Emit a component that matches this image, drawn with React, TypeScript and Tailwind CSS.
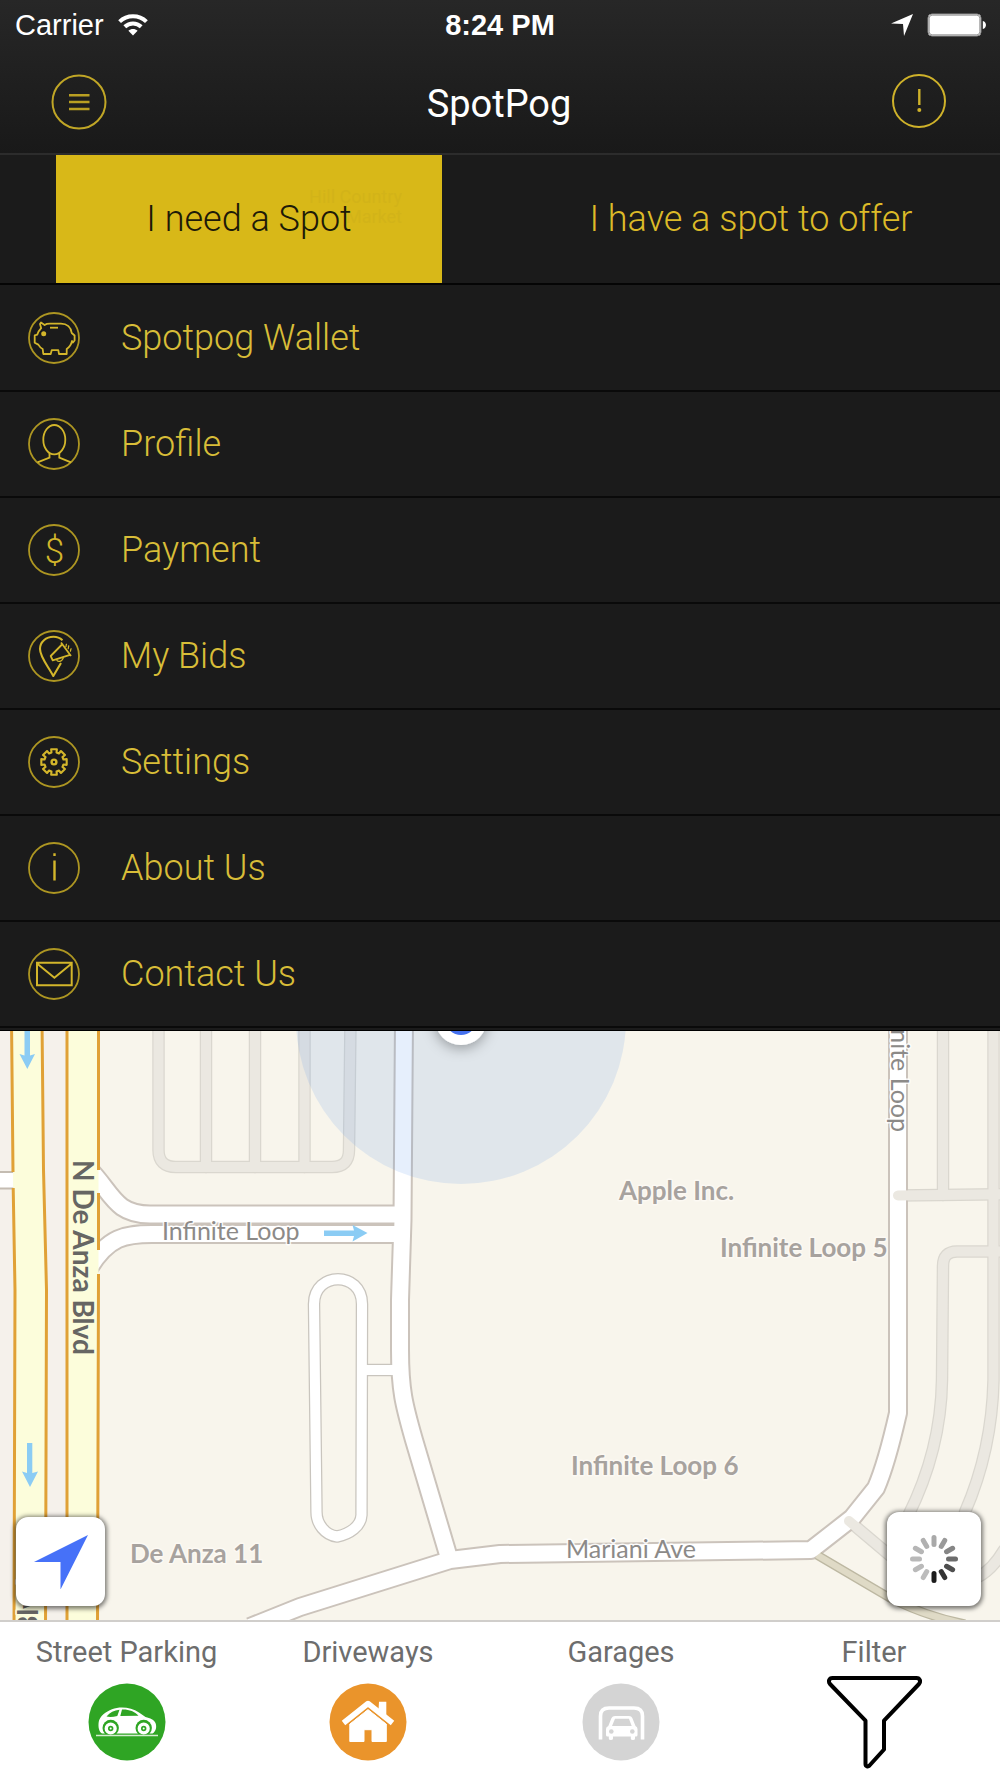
import React from "react";

const GOLD = "#d3b62b";

function Ring({ children }: { children?: React.ReactNode }) {
  return (
    <svg viewBox="0 0 52 52" className="size-[52px] shrink-0" fill="none" stroke={GOLD} strokeWidth="1.8" aria-hidden="true">
      <circle cx="26" cy="26" r="25" stroke="#ad9622" strokeWidth="1.8" />
      {children}
    </svg>
  );
}

function gearPath(cx: number, cy: number, outer: number, inner: number, teeth: number) {
  const step = (Math.PI * 2) / teeth;
  const pts: string[] = [];
  for (let i = 0; i < teeth; i++) {
    const a = i * step - Math.PI / 2;
    const spots: [number, number][] = [
      [inner, -0.26],
      [outer, -0.22],
      [outer, 0.22],
      [inner, 0.26],
    ];
    for (const [r, o] of spots) {
      pts.push(`${(cx + r * Math.cos(a + o)).toFixed(2)} ${(cy + r * Math.sin(a + o)).toFixed(2)}`);
    }
  }
  return `M${pts.join("L")}Z`;
}

const menu: { label: string; icon: React.ReactNode }[] = [
  {
    label: "Spotpog Wallet",
    icon: (
      <Ring>
        <path strokeLinejoin="round" d="M13 10.5L16.6 13C18 12 20 11.7 22 11.7H33C39 11.7 43 15.5 43.7 21L46.6 23.5V28.5L45 30.5L44 29C43.3 32.5 41.5 35 38.7 37V42H31L30.3 38.2H23.7L22.7 42H15.3L14.7 37C12.6 36 11.5 34.6 10.3 32.6L6.7 30.8V23.3L9.3 22.6C10 20 11.5 18 13.2 16.2L12 12Z" />
        <circle cx="15.7" cy="21.7" r="1.6" fill={GOLD} />
        <path d="M22 15.7H30" />
      </Ring>
    ),
  },
  {
    label: "Profile",
    icon: (
      <Ring>
        <ellipse cx="26.3" cy="21.7" rx="11" ry="14.7" />
        <path d="M21.5 35V39.6L9.5 44.4M31.3 35V39.6L43 44.4" />
      </Ring>
    ),
  },
  {
    label: "Payment",
    icon: (
      <Ring>
        <text x="26.5" y="39" textAnchor="middle" fill={GOLD} stroke="none" fontSize="35" fontFamily="Roboto, sans-serif" fontWeight="300">$</text>
      </Ring>
    ),
  },
  {
    label: "My Bids",
    icon: (
      <Ring>
        <path strokeWidth="2.1" strokeLinejoin="round" d="M34.5 10.3C32 8 29 6.8 25.5 6.8C18 6.8 12 12 12 19C12 27 20 36 25.3 46L33 33" />
        <path strokeLinejoin="round" d="M33 12.5L43 26M34 14.5L22.7 26L24.7 30.3L42 24.8" />
        <path strokeWidth="1.2" d="M28.5 29.5C29.5 32.5 34 32 35.5 27.5M37.5 17C39 16 37.3 15 38.8 14M39.8 19C41.3 18 39.6 17 41.1 15.5M42 21.5C43.5 20.5 41.8 19.5 43.5 18.5" />
      </Ring>
    ),
  },
  {
    label: "Settings",
    icon: (
      <Ring>
        <path strokeWidth="2.1" strokeLinejoin="round" d={gearPath(26, 26, 13, 9.8, 8)} />
        <circle cx="26" cy="26" r="2.4" strokeWidth="2.4" />
      </Ring>
    ),
  },
  {
    label: "About Us",
    icon: (
      <Ring>
        <path strokeWidth="2.4" d="M26.5 18.5V38.5M26.5 11.2V14" />
      </Ring>
    ),
  },
  {
    label: "Contact Us",
    icon: (
      <Ring>
        <path strokeWidth="2" d="M9 14.7H43.7V37.3H9ZM9 15.5L26.4 29.7L43.7 15.5" />
      </Ring>
    ),
  },
];

function StatusBar() {
  return (
    <div className="relative flex h-[50px] items-center justify-between pr-[13px] pl-[15px] font-['Liberation_Sans',sans-serif] text-[29px] leading-8 text-white">
      <div className="flex items-center gap-3.5">
        <span>Carrier</span>
        <svg viewBox="0 0 30 22" className="h-[22px] w-[30px]" fill="none" stroke="#fff" strokeWidth="4" aria-hidden="true">
          <path d="M1.6 7.6C9 .4 21 .4 28.4 7.6" />
          <path d="M6.8 12.8C11.5 8.3 18.5 8.3 23.2 12.8" />
          <path d="M15 21.6L10.4 16.8C13 14.4 17 14.4 19.6 16.8Z" fill="#fff" stroke="none" />
        </svg>
      </div>
      <span className="absolute left-1/2 -translate-x-1/2 font-bold">8:24 PM</span>
      <div className="flex items-center gap-3.5">
        <svg viewBox="0 0 22 22" className="size-[22px]" fill="#fff" aria-hidden="true">
          <path d="M22 0L13 22L12 10L0 9.5Z" />
        </svg>
        <svg viewBox="0 0 60 24" className="h-6 w-[60px]" aria-hidden="true">
          <rect x="1" y="1" width="53" height="22" rx="4" fill="#fff" stroke="#8a8a8a" strokeWidth="1" />
          <rect x="2.2" y="2.2" width="50.6" height="19.6" rx="3" fill="none" stroke="#555" strokeWidth=".6" />
          <path d="M55.8 8C60 9 60 15 55.8 16Z" fill="#fff" />
        </svg>
      </div>
    </div>
  );
}

function Roads() {
  const parking = [
    "M158.5 1020V1150Q158.5 1167 176 1167H332Q349 1167 349 1150L350.5 1020",
    "M206 1020V1167",
    "M255 1020V1167",
    "M304.5 1020V1167",
    "M943 1020V1195",
    "M898 1195.500L1010 1194",
    "M993.500 1020V1380Q992 1450 965 1512",
    "M1010 1251.500H957Q943 1251.500 943 1266L942 1380Q941 1450 908 1516",
    "M849 1521L900 1564",
    "M978 1577Q992 1570 1004 1550",
  ];
  const streets = [
    "M88 1168C112 1192 114 1214.500 150 1214.500H400",
    "M88 1270C108 1236 126 1234 152 1234H400",
    "M404 1020L402.500 1220L400 1300V1350C400 1390 404 1405 414 1440L449 1558",
    "M250 1627L300 1607L450 1560L500 1554L811 1550L852 1518L876 1488C886 1465 893 1435 898 1413V1020",
  ];
  const loop = [
    "M314 1304C314 1271 362 1271 362 1304L361.500 1515C361 1526 350 1534 337 1536.500C325 1535 316.500 1524 316.500 1512Z",
    "M362 1370H396",
  ];
  return (
    <>
      <rect y="1020" width="14" height="610" fill="#f5f1eb" />
      <rect x="44" y="1020" width="24" height="610" fill="#f5f1eb" />
      <g fill="none" stroke="#dad7cf" strokeWidth="12.500" strokeLinecap="round">{parking.map((d) => <path key={d} d={d} />)}</g>
      <g fill="none" stroke="#cbc3bb" strokeWidth="20" strokeLinejoin="round">{streets.map((d) => <path key={d} d={d} />)}</g>
      <path d="M817 1555L890 1598Q925 1616 965 1624" fill="none" stroke="#bdb8a2" strokeWidth="9" />
      <path d="M817 1555L890 1598Q925 1616 965 1624" fill="none" stroke="#dfdac6" strokeWidth="6.500" />
      <g fill="none" stroke="#c9c5be" strokeWidth="12.500">{loop.map((d) => <path key={d} d={d} />)}</g>
      <g fill="none" stroke="#fff" strokeWidth="16" strokeLinejoin="round">{streets.map((d) => <path key={d} d={d} />)}</g>
      <g fill="none" stroke="#fff" strokeWidth="10">{loop.map((d) => <path key={d} d={d} />)}</g>
      <g fill="none" stroke="#ebe8e1" strokeWidth="10" strokeLinecap="round">{parking.map((d) => <path key={d} d={d} />)}</g>
      <path d="M0 1172H16V1188H0Z" fill="#fff" />
      <path d="M0 1172H14M0 1188.500H14" stroke="#c4bcb2" strokeWidth="2" />
      <path d="M11.500 1020L13 1170L15 1290L14 1630H45.500L46.500 1290L43.500 1170L42 1020Z" fill="#fcfddb" />
      <path d="M67 1020H98.500V1630H67Z" fill="#fcfddb" />
      <path d="M11.500 1020L13 1172M13.200 1188L15 1290L14 1630M45.500 1630L46.500 1290L43.500 1170L42 1020M67 1020V1630M98.500 1020V1170M98.500 1193V1250M98.500 1274L97.500 1630" fill="none" stroke="#e0a136" strokeWidth="3" />
      <path d="M13.200 1174H18V1187H13.200Z" fill="#fcfddb" />
    </>
  );
}

function StreetMap() {
  return (
    <svg viewBox="0 1031 1000 589" preserveAspectRatio="xMidYMid slice" className="absolute inset-0 size-full" role="img" aria-label="Map of Infinite Loop">
      <defs>
        <filter id="dotShadow" x="-50%" y="-50%" width="200%" height="200%">
          <feDropShadow dx="0" dy="3" stdDeviation="7" floodColor="#000" floodOpacity=".35" />
        </filter>
      </defs>
      <rect y="1020" width="1000" height="610" fill="#f8f5ec" />
      <Roads />
      <circle cx="461" cy="1019" r="165" fill="rgb(88,148,235)" fillOpacity=".15" />
      <circle cx="461" cy="1019" r="26" fill="#fff" filter="url(#dotShadow)" />
      <circle cx="461" cy="1019" r="16" fill="#4470ee" />
      <g fill="#8bccf4">
        <path d="M24.500 1020H30V1055.500L35 1054L27.300 1069L19.500 1054L24.500 1055.500Z" />
        <path d="M27 1443H32.300V1473L38 1471.500L30 1487L22 1471.500L27 1473Z" />
        <path d="M324 1230.500V1236H354L352.500 1241.500L367.500 1233L352.500 1225L354 1230.500Z" />
      </g>
      <g fontFamily="Lato, sans-serif" fontSize="26" paintOrder="stroke" strokeLinejoin="round">
        <g fontSize="25" fill="#8c8a88" stroke="#fff" strokeOpacity=".85" strokeWidth="3">
          <text x="162" y="1240">Infinite Loop</text>
          <text x="566" y="1558">Mariani Ave</text>
          <text transform="translate(891 1132) rotate(90)" textAnchor="end">Infinite Loop</text>
        </g>
        <g fill="#a7a29e" fontWeight="700" stroke="#fcf9f3" strokeWidth="3">
          <text x="619" y="1200">Apple Inc.</text>
          <text x="720" y="1257">Infinite Loop 5</text>
          <text x="571" y="1475">Infinite Loop 6</text>
          <text x="130" y="1563">De Anza 11</text>
        </g>
        <g fontSize="28" fontWeight="700" fill="#666663" stroke="#fcfddb" strokeWidth="3">
          <text transform="translate(73 1160) rotate(90)">N De Anza Blvd</text>
          <text transform="translate(38 1634) rotate(-90)">Blvd</text>
        </g>
      </g>
    </svg>
  );
}

const spokes = ["#a9a9a9", "#9a9a9a", "#868686", "#6c6c6c", "#4f4f4f", "#343434", "#1c1c1c", "#bcbcbc", "#bababa", "#b9b9b9", "#b6b6b6", "#b0b0b0"];

function MapControls() {
  return (
    <div className="absolute inset-x-0 bottom-0 flex items-end justify-between pr-[19px] pb-3.5 pl-4">
      <button type="button" aria-label="Show my location" className="flex size-[89px] items-center justify-center rounded-xl bg-white shadow-[0_1px_4px_2px_rgba(0,0,0,0.5)]">
        <svg viewBox="0 0 54 54" className="size-[54px]" fill="#4671f8" aria-hidden="true">
          <path d="M54 0L26.500 54.500V27L0 27Z" />
        </svg>
      </button>
      <button type="button" aria-label="Loading" className="flex size-[94px] items-center justify-center rounded-xl bg-white shadow-[0_1px_4px_2px_rgba(0,0,0,0.5)]">
        <svg viewBox="-24 -24 48 48" className="size-12" strokeWidth="5" strokeLinecap="round" aria-hidden="true">
          {spokes.map((color, i) => (
            <path key={i} d="M0 -14.500V-21.500" stroke={color} transform={`rotate(${i * 30})`} />
          ))}
        </svg>
      </button>
    </div>
  );
}

const filters: { label: string; icon: React.ReactNode }[] = [
  {
    label: "Street Parking",
    icon: (
      <svg viewBox="0 0 78 78" className="size-[78px]" aria-hidden="true">
        <circle cx="39" cy="39" r="38.500" fill="#2fa524" />
        <path fill="#fff" d="M14 50.500C11 49 10 44 10.700 39C11.500 33.500 18 28.500 24 26.300C32 23 43 24 51 29.500L57.500 34C62 35 66.500 37 67.500 40C69 44 68 48.500 64.500 50.500Z" />
        <path fill="#2fa524" d="M18.500 33.500C22 29.500 26 27.300 31.500 26.800L29.300 33Q23 34.500 18.500 33.500ZM34 26.600C41 26.300 46.500 28.500 50.500 32.800L32.300 33Z" />
        <g fill="#2fa524">
          <circle cx="22.700" cy="45" r="8.200" />
          <circle cx="55.700" cy="45" r="8.200" />
        </g>
        <g fill="#2fa524" stroke="#fff" strokeWidth="3.400">
          <circle cx="22.700" cy="45.500" r="4.400" />
          <circle cx="55.700" cy="45.500" r="4.400" />
        </g>
        <circle cx="22.700" cy="45.500" r="1" fill="#fff" />
        <circle cx="55.700" cy="45.500" r="1" fill="#fff" />
        <path d="M8 52.500H70" stroke="#d4edd0" strokeWidth="1.500" />
      </svg>
    ),
  },
  {
    label: "Driveways",
    icon: (
      <svg viewBox="0 0 78 78" className="size-[78px]" aria-hidden="true">
        <circle cx="39" cy="39" r="38.500" fill="#ea942b" />
        <path fill="#fff" d="M50 18.700H57.300V33L49.500 27Z" />
        <path fill="#fff" stroke="#fff" strokeLinejoin="round" d="M20.800 41L39 26.500L57.300 41V58.500H43V46.700H35V58.500H20.800Z" />
        <path d="M14 39.500L39 19.500L64 39.500" transform="translate(0 3)" fill="none" stroke="#ea942b" strokeWidth="5" />
        <path d="M14.500 40L39 20.500L63.500 40" fill="none" stroke="#fff" strokeWidth="5.500" strokeLinejoin="round" />
      </svg>
    ),
  },
  {
    label: "Garages",
    icon: (
      <svg viewBox="0 0 78 78" className="size-[78px]" aria-hidden="true">
        <circle cx="39" cy="39" r="38.500" fill="#d4d4d4" />
        <path d="M18.500 56.500V33Q18.500 25 27 25H52Q60.500 25 60.500 33V56.500" fill="none" stroke="#fff" strokeWidth="3.600" />
        <path fill="#fff" d="M33 33H47Q49.500 33 50.300 35L53.500 43Q55.500 44 55.500 46V52Q55.500 53.500 54 53.500H53V55.500Q53 57 51 57Q48.800 57 48.800 55.500V53.500H31V55.500Q31 57 28.800 57Q26.800 57 26.800 55.500V53.500H25.500Q24 53.500 24 52V46Q24 44 26.300 43L29.500 35Q30.500 33 33 33Z" />
        <path fill="#d4d4d4" d="M33 35.800H47L49.700 43H30Z" />
        <circle cx="29.300" cy="48.500" r="2.300" fill="#d4d4d4" />
        <circle cx="50.300" cy="48.500" r="2.300" fill="#d4d4d4" />
      </svg>
    ),
  },
  {
    label: "Filter",
    icon: (
      <svg viewBox="0 0 96 96" className="size-24" fill="none" stroke="#000" strokeWidth="4" strokeLinejoin="round" aria-hidden="true">
        <path d="M6.500 4H90.500C94 4 95 7.500 93 10L58 46.700V75.500L43.500 91.500C42 93 39.500 92.500 39.500 90V46.700L4 10C2 7.500 3 4 6.500 4Z" />
      </svg>
    ),
  },
];

export default function App() {
  return (
    <div className="flex min-h-screen w-full flex-col bg-[#1b1b1b] font-['Roboto',sans-serif]">
      <header className="border-b-2 border-[#2c2c2c] bg-linear-to-b from-[#272727] to-[#191919]">
        <StatusBar />
        <div className="flex h-[103px] items-center justify-between pr-[53px] pl-[51px]">
          <button type="button" aria-label="Menu" className="size-14">
            <svg viewBox="0 0 56 56" fill="none" stroke="#b99f22" strokeWidth="2" aria-hidden="true">
              <circle cx="28" cy="28" r="26.500" stroke="#c0a626" />
              <path d="M18 21.200H38.500M18 28H38.500M18 35H38.500" strokeWidth="2.400" />
            </svg>
          </button>
          <h1 className="pt-1 text-[38px] leading-[44px] text-white">SpotPog</h1>
          <button type="button" aria-label="Alerts" className="size-14">
            <svg viewBox="0 0 56 56" fill="none" stroke="#cfb22a" strokeWidth="2" aria-hidden="true">
              <circle cx="28" cy="27" r="26" />
              <path d="M28.300 15V31" strokeWidth="2.400" />
              <circle cx="28.300" cy="36" r="2" fill="#cfb22a" stroke="none" />
            </svg>
          </button>
        </div>
      </header>

      <div className="grid grid-cols-2 gap-[116px] border-b-2 border-[#050505] px-14 text-[36px] leading-[44px] font-light">
        <button type="button" aria-pressed="true" className="relative h-32 bg-[#d8b818] text-[#1d1a08]">
          <span className="absolute top-8 right-10 text-right text-[18px] leading-5 font-normal text-[#d2b319]" aria-hidden="true">
            Hill Country<br />Market
          </span>
          <span className="relative">I need a Spot</span>
        </button>
        <button type="button" aria-pressed="false" className="h-32 whitespace-nowrap text-[#dcba28]">I have a spot to offer</button>
      </div>

      <nav aria-label="Main" className="pt-px">
        <ul>
          {menu.map((item) => (
            <li key={item.label} className="border-b-2 border-[#0a0a0a]">
              <a href="#" className="flex h-[104px] items-center gap-[41px] pl-7 text-[36px] leading-[44px] font-light text-[#d8bd38]">
                {item.icon}
                {item.label}
              </a>
            </li>
          ))}
        </ul>
      </nav>
      <div className="h-[3px] border-b border-black" />

      <main className="relative min-h-[589px] flex-1 overflow-hidden">
        <StreetMap />
        <MapControls />
      </main>

      <footer className="relative grid grid-cols-[253fr_230fr_276fr_230fr] border-t-2 border-[#d0cecb] bg-white pr-[11px] pb-2">
        {filters.map((f) => (
          <button key={f.label} type="button" className="flex flex-col items-center pt-3 text-[29px] leading-9 text-[#6d6d6d]">
            {f.label}
            <span className="mt-1 flex h-24 items-center">{f.icon}</span>
          </button>
        ))}
      </footer>
    </div>
  );
}
